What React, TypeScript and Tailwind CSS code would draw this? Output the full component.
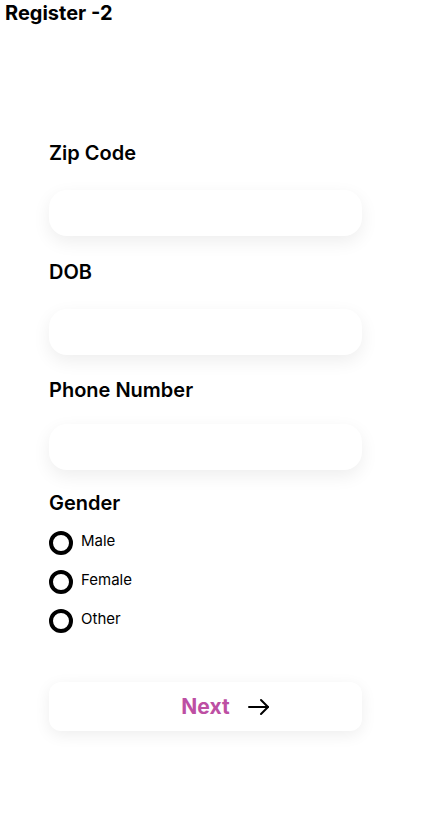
import { useState } from 'react';

const font = { fontFamily: 'Inter, "Noto Sans", sans-serif' };

const Field = ({ label, className }: { label: string; className?: string }) => (
	<div className={className}>
		<label className="block text-[20px] leading-[24px] font-semibold text-black">{label}</label>
		<input
			type="text"
			className="mt-[25px] block w-[313px] h-[46px] rounded-[18px] bg-white outline-none px-4 shadow-[0_6px_18px_rgba(0,0,0,0.07)]"
		/>
	</div>
);

export default function App() {
	const [gender, setGender] = useState('');

	return (
		<div className="min-h-[839px] w-[430px] bg-white text-black" style={font}>
			<h1 className="px-[5px] pt-[1px] text-[20px] leading-[24px] font-bold">Register -2</h1>

			<div className="pl-[49px] pt-[116px]">
				<Field label="Zip Code" />
				<Field label="DOB" className="mt-[24px]" />
				<Field label="Phone Number" className="mt-[23px] [&_input]:mt-[22px]" />

				<div className="mt-[21px]">
					<div className="text-[20px] leading-[24px] font-semibold">Gender</div>
					<div className="mt-[16px] flex flex-col gap-[15px]">
						{['Male', 'Female', 'Other'].map((g) => (
							<label key={g} className="flex items-center gap-[8px] cursor-pointer" onClick={() => setGender(g)}>
								<span className="w-[24px] h-[24px] rounded-full border-[4.5px] border-black flex items-center justify-center">
									{gender === g && <span className="w-[8px] h-[8px] rounded-full bg-black" />}
								</span>
								<span className="text-[15px] leading-[20px] mb-[4px]">{g}</span>
							</label>
						))}
					</div>
				</div>

				<button className="mt-[49px] w-[313px] h-[49px] rounded-[12px] bg-white shadow-[0_4px_16px_rgba(0,0,0,0.07)] flex items-center justify-center gap-[18px] pl-[40px]">
					<span className="text-[21px] font-bold text-[#bd4fa3]">Next</span>
					<svg width="22" height="18" viewBox="0 0 22 18" fill="none" stroke="black" strokeWidth="2" strokeLinecap="round" strokeLinejoin="round">
						<path d="M1 9h19" />
						<path d="M13 2l7 7-7 7" />
					</svg>
				</button>
			</div>
		</div>
	);
}
